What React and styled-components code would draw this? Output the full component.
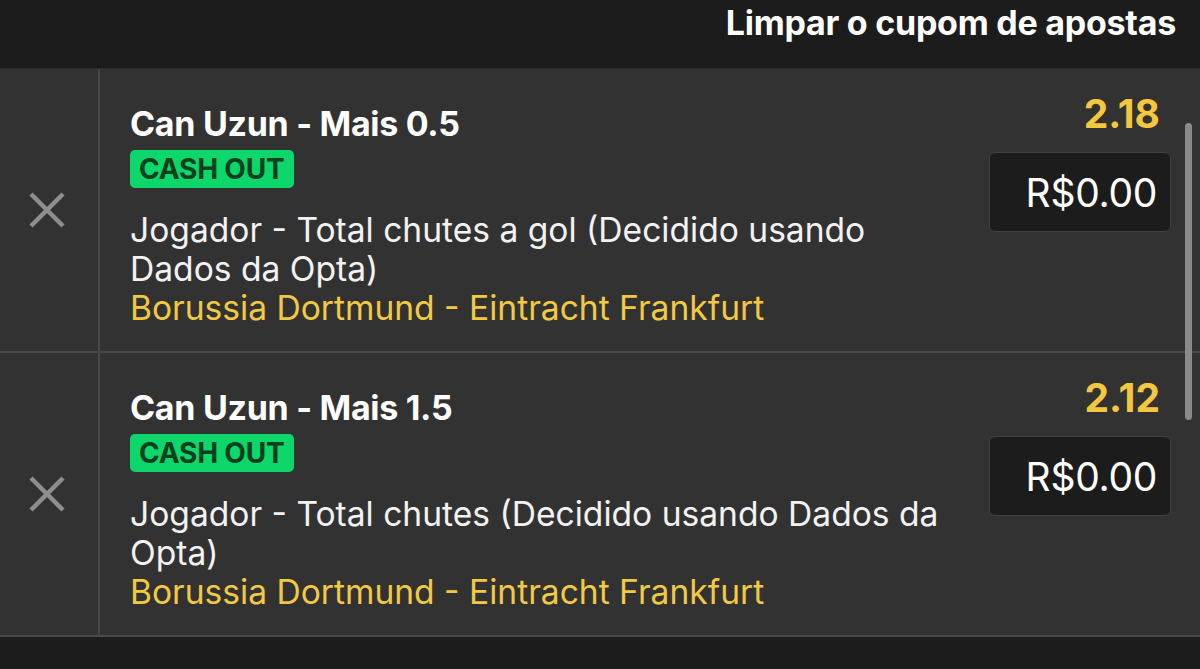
import React from 'react';
import styled, { createGlobalStyle } from 'styled-components';

const GlobalStyle = createGlobalStyle`
  html, body {
    margin: 0;
    padding: 0;
    background: #1c1c1c;
  }
  body {
    font-family: Inter, "Noto Sans", sans-serif;
    -webkit-font-smoothing: antialiased;
  }
`;

const Page = styled.div`
  width: 1200px;
  height: 669px;
  overflow: hidden;
  background: #1c1c1c;
  display: flex;
  flex-direction: column;
`;

const Header = styled.div`
  height: 68px;
  box-sizing: border-box;
  display: flex;
  align-items: flex-start;
  justify-content: flex-end;
  padding: 3px 24px 0 0;
  flex-shrink: 0;
`;

const ClearButton = styled.button`
  background: none;
  border: 0;
  padding: 0;
  color: #ffffff;
  font-family: inherit;
  font-size: 34px;
  font-weight: 700;
  line-height: 40px;
  letter-spacing: -0.25px;
`;

const List = styled.div`
  position: relative;
  display: flex;
  flex-direction: column;
  border-top: 1px solid #2c2c2c;
  border-bottom: 2px solid #4a4a4a;
`;

const Bet = styled.div`
  display: flex;
  height: 282px;
  background: #333233;
  & + & {
    border-top: 2px solid #4a4a4a;
  }
`;

const RemoveCell = styled.div`
  width: 100px;
  flex-shrink: 0;
  display: flex;
  align-items: center;
  justify-content: center;
  border-right: 2px solid #484848;
  padding-right: 4px;
  box-sizing: border-box;
`;

const Content = styled.div`
  flex: 1;
  padding: 35px 0 0 30px;
  display: flex;
  flex-direction: column;
  align-items: flex-start;
`;

const Title = styled.div`
  color: #ffffff;
  font-size: 34px;
  font-weight: 700;
  line-height: 39px;
  letter-spacing: -0.3px;
`;

const Badge = styled.span`
  margin-top: 7px;
  background: #0dd66b;
  color: #07401c;
  font-size: 28px;
  font-weight: 700;
  line-height: 38px;
  padding: 0 10px 0 9px;
  border-radius: 5px;
  letter-spacing: -0.2px;
`;

const Market = styled.div`
  margin-top: 22px;
  color: #f2f2f2;
  font-size: 33.6px;
  line-height: 39px;
  max-width: 830px;
`;

const Event = styled.div`
  color: #f1c945;
  font-size: 33.6px;
  line-height: 39px;
`;

const Side = styled.div`
  width: 182px;
  flex-shrink: 0;
  margin-right: 29px;
  padding-top: 25px;
  display: flex;
  flex-direction: column;
  align-items: flex-end;
`;

const Odds = styled.div`
  color: #f3c83e;
  font-size: 39px;
  font-weight: 700;
  line-height: 40px;
  margin-right: 11px;
`;

const Stake = styled.div`
  margin-top: 18px;
  width: 100%;
  height: 80px;
  box-sizing: border-box;
  background: #1c1c1c;
  border: 1.5px solid #404040;
  border-radius: 6px;
  display: flex;
  align-items: center;
  justify-content: flex-end;
  padding-right: 13px;
  color: #ffffff;
  font-size: 39px;
  letter-spacing: -0.3px;
`;

const ScrollThumb = styled.div`
  position: absolute;
  right: 8px;
  top: 54px;
  width: 7px;
  height: 297px;
  border-radius: 4px;
  background: #8a8a8a;
`;

const Footer = styled.div`
  flex: 1;
  background: #1c1c1c;
`;

const CloseIcon = () => (
  <svg width="38" height="36" viewBox="0 0 38 36" fill="none">
    <path d="M3 2L35 34M35 2L3 34" stroke="#8e8e8e" strokeWidth="4.5" strokeLinecap="butt" />
  </svg>
);

const bets = [
  {
    title: 'Can Uzun - Mais 0.5',
    market: 'Jogador - Total chutes a gol (Decidido usando Dados da Opta)',
    odds: '2.18',
  },
  {
    title: 'Can Uzun - Mais 1.5',
    market: 'Jogador - Total chutes (Decidido usando Dados da Opta)',
    odds: '2.12',
  },
];

export default function App() {
  return (
    <Page>
      <GlobalStyle />
      <Header>
        <ClearButton>Limpar o cupom de apostas</ClearButton>
      </Header>
      <List>
        {bets.map((bet) => (
          <Bet key={bet.title}>
            <RemoveCell>
              <CloseIcon />
            </RemoveCell>
            <Content>
              <Title>{bet.title}</Title>
              <Badge>CASH OUT</Badge>
              <Market>{bet.market}</Market>
              <Event>Borussia Dortmund - Eintracht Frankfurt</Event>
            </Content>
            <Side>
              <Odds>{bet.odds}</Odds>
              <Stake>R$0.00</Stake>
            </Side>
          </Bet>
        ))}
        <ScrollThumb />
      </List>
      <Footer />
    </Page>
  );
}
